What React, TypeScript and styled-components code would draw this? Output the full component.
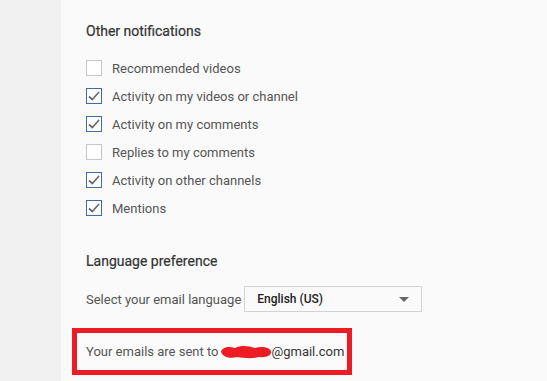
import React from 'react';
import styled, { createGlobalStyle } from 'styled-components';

const GlobalStyle = createGlobalStyle`
  html, body {
    margin: 0;
    padding: 0;
    background: #f1f1f1;
    font-family: Roboto, "Liberation Sans", Arial, sans-serif;
  }
`;

const Page = styled.div`
  display: flex;
  height: 381px;
  overflow: hidden;
`;

const Gutter = styled.div`
  width: 61px;
  flex-shrink: 0;
  background: #f1f1f1;
`;

const Panel = styled.div`
  flex: 1;
  background: #fafafa;
  padding: 21px 0 0 25px;
  box-sizing: border-box;
`;

const Heading = styled.h3`
  margin: 0;
  font-size: 14px;
  font-weight: 400;
  color: #333;
  line-height: 20px;
  -webkit-text-stroke: 0.2px #333;
`;

const CheckList = styled.div`
  display: flex;
  flex-direction: column;
  gap: 12px;
  margin-top: 19px;
`;

const CheckRow = styled.label`
  display: flex;
  align-items: center;
  gap: 10px;
  height: 16px;
  font-size: 13px;
  color: #555;
`;

const Box = styled.span<{ $checked: boolean }>`
  width: 16px;
  height: 16px;
  box-sizing: border-box;
  border: 1px solid ${({ $checked }) => ($checked ? '#3b6bab' : '#c6c6c6')};
  background: #fff;
  display: flex;
  align-items: center;
  justify-content: center;
`;

const Section = styled.div`
  margin-top: 35px;
`;

const LangRow = styled.div`
  display: flex;
  align-items: center;
  margin-top: 15px;
  font-size: 13px;
  color: #555;
`;

const Select = styled.div`
  margin-left: 3px;
  width: 178px;
  height: 26px;
  box-sizing: border-box;
  border: 1px solid #d3d3d3;
  background: #fafafa;
  display: flex;
  align-items: center;
  justify-content: space-between;
  padding: 0 12px 0 12px;
  font-size: 12px;
  font-weight: 500;
  color: #222;
`;

const Caret = styled.span`
  width: 0;
  height: 0;
  border-left: 5px solid transparent;
  border-right: 5px solid transparent;
  border-top: 5px solid #666;
`;

const Highlight = styled.div`
  margin: 16px 0 0 -14px;
  width: 280px;
  height: 47px;
  box-sizing: border-box;
  border: 5px solid #ed1c24;
  background: #fbfbfb;
  display: flex;
  align-items: center;
  padding-left: 9px;
  font-size: 13px;
  color: #555;
`;

const Redacted = styled.svg`
  display: block;
  margin: 0 -1px 0 0;
`;

const Mail = styled.span`
  color: #333;
`;

const items = [
  { label: 'Recommended videos', checked: false },
  { label: 'Activity on my videos or channel', checked: true },
  { label: 'Activity on my comments', checked: true },
  { label: 'Replies to my comments', checked: false },
  { label: 'Activity on other channels', checked: true },
  { label: 'Mentions', checked: true },
];

function Check() {
  return (
    <svg width="14" height="14" viewBox="0 0 14 14">
      <path d="M2 7.5 L5.3 10.5 L12 3" fill="none" stroke="#6a6a6a" strokeWidth="1.7" />
    </svg>
  );
}

export default function App() {
  return (
    <>
      <GlobalStyle />
      <Page>
        <Gutter />
        <Panel>
          <Heading>Other notifications</Heading>
          <CheckList>
            {items.map((it) => (
              <CheckRow key={it.label}>
                <Box $checked={it.checked}>{it.checked && <Check />}</Box>
                {it.label}
              </CheckRow>
            ))}
          </CheckList>
          <Section>
            <Heading>Language preference</Heading>
            <LangRow>
              Select your email language
              <Select>
                English (US)
                <Caret />
              </Select>
            </LangRow>
          </Section>
          <Highlight>
            Your emails are sent to
            <Redacted width="54" height="16" viewBox="0 0 54 16">
              <path
                d="M2 8 C3 3 10 2 16 4 C22 1 30 2 36 4 C42 2 50 3 52 7 C53 11 48 14 40 13 C33 15 25 14 18 13 C11 15 4 13 2 8 Z"
                fill="#ed1c24"
              />
            </Redacted>
            <Mail>@gmail.com</Mail>
          </Highlight>
        </Panel>
      </Page>
    </>
  );
}
